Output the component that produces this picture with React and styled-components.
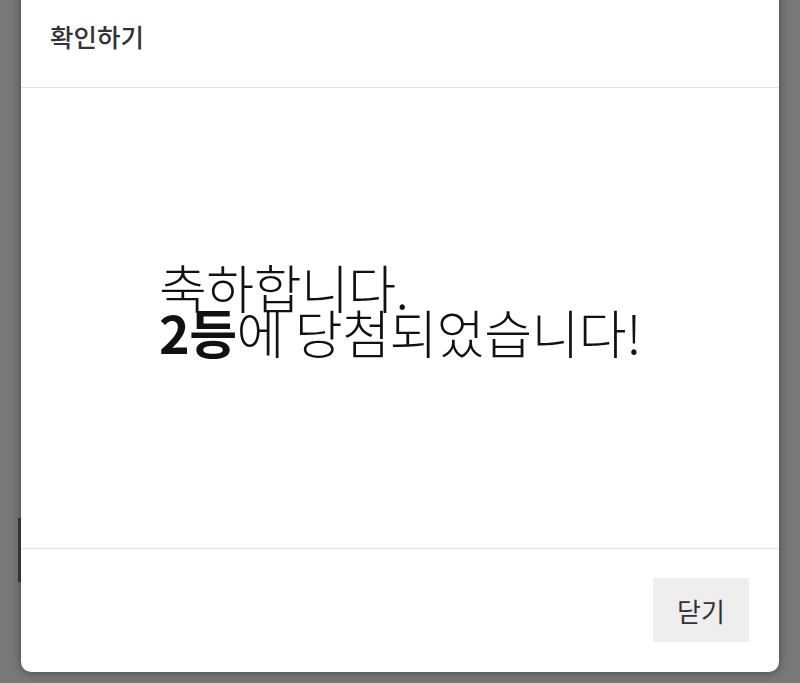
import React from "react";
import styled, { createGlobalStyle } from "styled-components";

const Global = createGlobalStyle`
  html, body { margin: 0; padding: 0; }
  body {
    font-family: "Noto Sans CJK KR", "Noto Sans", sans-serif;
    background: #787878;
    overflow: hidden;
  }
`;

const Overlay = styled.div`
  position: relative;
  width: 800px;
  height: 683px;
  background: #787878;
  overflow: hidden;
`;

const BehindStrip = styled.div`
  position: absolute;
  left: 18px;
  top: 518px;
  width: 3px;
  height: 64px;
  background: #4a3a36;
`;

const Modal = styled.div`
  position: relative;
  margin: -14px 21px 0;
  background: #fff;
  border-radius: 10px;
  box-shadow: 0 0 10px rgba(0, 0, 0, 0.45);
  display: flex;
  flex-direction: column;
`;

const Header = styled.div`
  padding: 32px 29px 33px;
  border-bottom: 1px solid #e2e2e2;
`;

const Title = styled.h2`
  margin: 0;
  font-size: 25.5px;
  line-height: 36px;
  font-weight: 500;
  color: #333;
`;

const Body = styled.div`
  height: 460px;
  box-sizing: border-box;
  padding-bottom: 18px;
  display: flex;
  align-items: center;
  justify-content: center;
`;

const Message = styled.p`
  margin: 0;
  display: inline-block;
  text-align: left;
  font-size: 52px;
  line-height: 45px;
  letter-spacing: -0.5px;
  font-weight: 300;
  color: #111;
`;

const Strong = styled.b`
  font-weight: 700;
`;

const Footer = styled.div`
  border-top: 1px solid #e2e2e2;
  padding: 29px 30px 30px;
  display: flex;
  justify-content: flex-end;
`;

const CloseButton = styled.button`
  width: 96px;
  height: 64px;
  border: none;
  background: #eeeeee;
  color: #333;
  font-family: "Noto Sans CJK KR", "Noto Sans", sans-serif;
  font-size: 26px;
  cursor: pointer;
`;

export default function App() {
  return (
    <>
      <Global />
      <Overlay>
        <BehindStrip />
        <Modal>
          <Header>
            <Title>확인하기</Title>
          </Header>
          <Body>
            <Message>
              축하합니다.
              <br />
              <Strong>2등</Strong>에 당첨되었습니다!
            </Message>
          </Body>
          <Footer>
            <CloseButton>닫기</CloseButton>
          </Footer>
        </Modal>
      </Overlay>
    </>
  );
}
